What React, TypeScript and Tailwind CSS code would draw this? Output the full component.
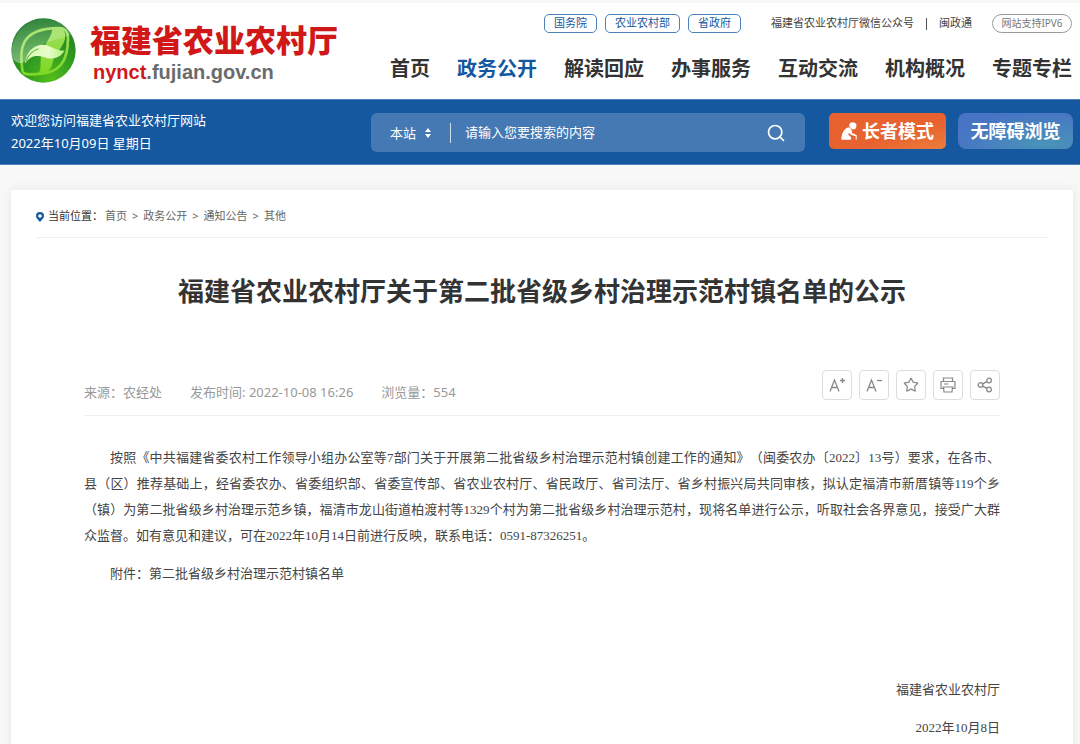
import { ReactNode } from 'react';
import { Search, Star } from 'lucide-react';

const portals = ['国务院', '农业农村部', '省政府'];

const navItems = ['首页', '政务公开', '解读回应', '办事服务', '互动交流', '机构概况', '专题专栏'];

const crumbs = ['首页', '政务公开', '通知公告', '其他'];

const Logo = () => (
  <svg viewBox="0 0 194 194" className="w-[65px] h-[65px] shrink-0" aria-hidden="true">
    <defs>
      <radialGradient id="ball" cx="0.62" cy="0.95" r="0.95">
        <stop offset="0" stopColor="#54bd1c" />
        <stop offset="0.45" stopColor="#2f9a20" />
        <stop offset="1" stopColor="#1f7a2c" />
      </radialGradient>
      <linearGradient id="ring" x1="0" y1="0" x2="0" y2="1">
        <stop offset="0" stopColor="#9ddf5c" />
        <stop offset="1" stopColor="#7fd824" />
      </linearGradient>
      <linearGradient id="gloss" x1="0" y1="0" x2="0" y2="1">
        <stop offset="0" stopColor="#fff" stopOpacity="0.08" />
        <stop offset="1" stopColor="#fff" stopOpacity="0.36" />
      </linearGradient>
      <linearGradient id="leaf" x1="0" y1="0" x2="1" y2="0">
        <stop offset="0" stopColor="#d9f9b4" />
        <stop offset="0.6" stopColor="#e6fcc8" />
        <stop offset="1" stopColor="#b5f081" />
      </linearGradient>
    </defs>
    <circle cx="97" cy="97" r="96" fill="url(#ball)" />
    <path
      d="M34 156C30 130 28 94 40 72C56 42 88 30 142 30C162 30 170 40 170 62C170 96 166 118 150 138C132 160 108 168 58 168C42 168 36 166 34 156Z"
      fill="none"
      stroke="url(#ring)"
      strokeWidth="8"
      strokeLinejoin="round"
    />
    <path
      d="M122 32C148 26 162 34 162 54C162 84 130 104 124 134C120 156 104 170 78 169C96 156 82 128 94 98C102 74 126 50 122 32Z"
      fill="url(#ring)"
    />
    <path
      d="M2 110C0 50 44 2 97 2C138 2 166 22 180 50C150 62 112 66 88 84C62 102 60 134 24 134C10 132 4 122 2 110Z"
      fill="url(#gloss)"
    />
    <path
      d="M42 136C44 106 64 82 94 80C120 80 128 98 160 98C148 116 132 124 110 120C88 114 64 104 42 136Z"
      fill="url(#leaf)"
    />
    <path d="M44 130C52 110 64 98 82 92" fill="none" stroke="#5fb83a" strokeWidth="3" />
  </svg>
);

const ElderIcon = () => (
  <svg viewBox="0 0 48 54" className="w-4 h-[18px]" fill="currentColor" aria-hidden="true">
    <path d="M27 3C34-1 43 1 46 7C47 10 45 12 46 15C45 21 38 24 32 21C26 18 22 8 27 3Z" />
    <path d="M22 16C10 20 1 34 1 53H29C32 49 31 45 26 42L21 36L25 34L32 40L42 41C44 38 43 35 39 35L33 33C34 26 30 18 22 16Z" />
    <path d="M40 39C46 37 49 41 47 45V53H44V44C43 42 42 42 40 42Z" />
  </svg>
);

const PinIcon = () => (
  <svg viewBox="0 0 24 30" className="w-2 h-[10px]" aria-hidden="true">
    <path
      fillRule="evenodd"
      fill="#15589f"
      d="M12 0A12 12 0 0 1 24 12C24 19 17 24 12 30C7 24 0 19 0 12A12 12 0 0 1 12 0ZM12 6.500A5.500 5.500 0 1 0 12 17.500A5.500 5.500 0 1 0 12 6.500Z"
    />
  </svg>
);

const PrintIcon = () => (
  <svg viewBox="0 0 16 16" className="w-4 h-4" fill="none" stroke="currentColor" strokeWidth="1.2" aria-hidden="true">
    <path d="M3.500 4V1H12.500V4M3.500 11.500H1V4.500H15V11.500H12.500M4 7H8.500M2.500 10H13.500M3.500 10L4 15H12L12.500 10" />
  </svg>
);

const ShareIcon = () => (
  <svg viewBox="0 0 16 16" className="w-4 h-4" fill="none" stroke="currentColor" strokeWidth="1.3" aria-hidden="true">
    <circle cx="3.500" cy="8" r="2.300" />
    <circle cx="12" cy="3.500" r="2.300" />
    <circle cx="12" cy="12.500" r="2.300" />
    <path d="M5.600 6.900L10 4.600M5.600 9.100L10 11.400" />
  </svg>
);

const FontSizeIcon = ({ plus = false }: { plus?: boolean }) => (
  <svg viewBox="0 0 18 16" className="w-[18px] h-4" fill="none" stroke="currentColor" strokeWidth="1.3" aria-hidden="true">
    <path d="M2 14.500L6.500 3L11 14.500M3.500 10.500H9.500" />
    <path d={plus ? 'M12 3.500H17M14.500 1V6' : 'M12 3.500H17'} />
  </svg>
);

const tools: { label: string; icon: ReactNode }[] = [
  { label: '放大字体', icon: <FontSizeIcon plus /> },
  { label: '缩小字体', icon: <FontSizeIcon /> },
  { label: '收藏', icon: <Star className="w-4 h-4" strokeWidth={1.8} /> },
  { label: '打印', icon: <PrintIcon /> },
  { label: '分享', icon: <ShareIcon /> },
];

const Header = () => (
  <header className="flex justify-between h-24 pl-[11px] pr-2 bg-white">
    <a href="#" className="flex gap-[14px] pt-[15px]">
      <Logo />
      <span className="block pt-[2px]">
        <span className="block text-[31px] leading-10 font-black text-[#d01818]">福建省农业农村厅</span>
        <span className="block pl-[3px] text-xl leading-6 font-bold font-['Liberation_Sans',sans-serif] text-[#6b6b6b]">
          <span className="text-[#d01818]">nynct</span>.fujian.gov.cn
        </span>
      </span>
    </a>

    <div className="flex flex-col items-end pt-[11px] whitespace-nowrap">
      <div className="flex items-center h-[19px] text-[11px] text-[#444]">
        <div className="flex gap-2 mr-[30px]">
          {portals.map((name) => (
            <a
              key={name}
              href="#"
              className="flex items-center h-[19px] px-[9px] border border-[#4c82bb] rounded-[5px] text-[#15589f]"
            >
              {name}
            </a>
          ))}
        </div>
        <a href="#">福建省农业农村厅微信公众号</a>
        <span className="w-px h-3 mx-3 bg-[#555]"></span>
        <a href="#">闽政通</a>
        <a
          href="#"
          className="flex items-center justify-center w-20 h-[19px] ml-5 border border-[#999] rounded-full text-[10px] text-[#777]"
        >
          网站支持IPV6
        </a>
      </div>
      <nav className="flex gap-[27px] mt-[21px] text-xl leading-[30px] font-bold text-[#333]">
        {navItems.map((item) => (
          <a key={item} href="#" className={item === '政务公开' ? 'text-[#15589f]' : ''}>
            {item}
          </a>
        ))}
      </nav>
    </div>
  </header>
);

const SearchBar = () => (
  <section className="flex items-start h-[66px] pl-[11px] pr-[7px] pt-[13px] bg-[#15589f] border-y border-[#4c82bb] text-[13px] text-white">
    <div className="w-[360px] -mt-1 leading-[23px]">
      <p>欢迎您访问福建省农业农村厅网站</p>
      <p>2022年10月09日 星期日</p>
    </div>

    <form className="flex flex-1 items-center h-[39px] pl-[19px] pr-[19px] rounded-md bg-[#4579b3]">
      <label className="flex items-center gap-2">
        <select aria-label="搜索范围" className="h-6 leading-6 appearance-none bg-transparent outline-none">
          <option>本站</option>
        </select>
        <svg viewBox="0 0 6 10" className="w-[6px] h-[10px]" fill="currentColor" aria-hidden="true">
          <path d="M3 0L6 4H0ZM3 10L0 6H6Z" />
        </svg>
      </label>
      <span className="w-px h-5 ml-[19px] mr-[14px] bg-[#d0dded]"></span>
      <input
        type="text"
        aria-label="搜索内容"
        placeholder="请输入您要搜索的内容"
        className="flex-1 min-w-0 bg-transparent outline-none placeholder:text-white"
      />
      <button type="button" aria-label="搜索">
        <Search className="w-5 h-5" />
      </button>
    </form>

    <div className="flex gap-3 ml-6 text-lg font-bold whitespace-nowrap">
      <button
        type="button"
        className="flex items-center justify-center gap-[5px] w-[117px] h-9 rounded-[5px] bg-linear-to-br from-[#e7622f] from-60% to-[#ec7d3c]"
      >
        <ElderIcon />
        长者模式
      </button>
      <button
        type="button"
        className="w-[115px] h-9 rounded-lg bg-[radial-gradient(ellipse_at_75%_85%,#4a94b8,#4774c4_75%)]"
      >
        无障碍浏览
      </button>
    </div>
  </section>
);

const Article = () => (
  <article className="px-[48px]">
    <h1 className="pt-[33px] text-center text-[26px] leading-10 font-bold text-[#333]">
      福建省农业农村厅关于第二批省级乡村治理示范村镇名单的公示
    </h1>

    <div className="flex justify-between mt-[59px] h-[46px] border-b border-[#eee]">
      <div className="flex gap-7 pt-3 text-[13px] leading-5 text-[#999]">
        <span>来源：农经处</span>
        <span>发布时间: 2022-10-08 16:26</span>
        <span>浏览量：554</span>
      </div>
      <div className="flex gap-[7px] text-[#888]">
        {tools.map((tool) => (
          <button
            key={tool.label}
            type="button"
            aria-label={tool.label}
            className="flex items-center justify-center w-[30px] h-[30px] border border-[#ddd] rounded"
          >
            {tool.icon}
          </button>
        ))}
      </div>
    </div>

    <div className="pt-[29px] pb-3 space-y-3 text-[13px] leading-[26px] text-[#444] font-['Liberation_Serif','Noto_Sans_CJK_SC',serif] [text-spacing-trim:space-all]">
      <p className="indent-[2em] text-justify">
        按照《中共福建省委农村工作领导小组办公室等7部门关于开展第二批省级乡村治理示范村镇创建工作的通知》（闽委农办〔2022〕13号）要求，在各市、县（区）推荐基础上，经省委农办、省委组织部、省委宣传部、省农业农村厅、省民政厅、省司法厅、省乡村振兴局共同审核，拟认定福清市新厝镇等119个乡（镇）为第二批省级乡村治理示范乡镇，福清市龙山街道柏渡村等1329个村为第二批省级乡村治理示范村，现将名单进行公示，听取社会各界意见，接受广大群众监督。如有意见和建议，可在2022年10月14日前进行反映，联系电话：0591-87326251。
      </p>
      <p className="indent-[2em]">附件：第二批省级乡村治理示范村镇名单</p>
      <div className="pt-[78px] space-y-3 text-right">
        <p>福建省农业农村厅</p>
        <p>2022年10月8日</p>
      </div>
    </div>
  </article>
);

const App = () => {
  return (
    <div
      lang="zh-CN"
      className="flex flex-col min-h-screen pt-[3px] bg-[#f8f8f8] font-['Noto_Sans','Noto_Sans_CJK_SC',sans-serif]"
    >
      <Header />
      <SearchBar />
      <main className="flex-1 mt-[25px] ml-[11px] mr-[7px] px-[25px] bg-white shadow-[0_0_10px_rgba(0,0,0,0.08)]">
        <nav
          aria-label="当前位置"
          className="flex items-center h-12 pt-[6px] border-b border-[#eee] text-[11px] text-[#666]"
        >
          <PinIcon />
          <span className="ml-1 mr-[2px] text-[#333]">当前位置：</span>
          {crumbs.map((crumb, index) => (
            <span key={crumb} className="flex">
              {index > 0 && <span className="mx-[5px]">&gt;</span>}
              <a href="#">{crumb}</a>
            </span>
          ))}
        </nav>
        <Article />
      </main>
    </div>
  );
};

export default App;
